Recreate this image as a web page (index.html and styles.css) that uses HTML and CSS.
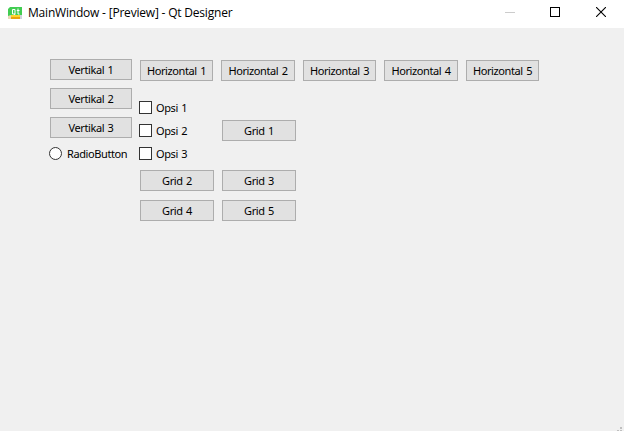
FILE: index.html
```html
<!DOCTYPE html>
<html lang="id">
<head>
<meta charset="utf-8">
<title>MainWindow - [Preview] - Qt Designer</title>
<link rel="stylesheet" href="styles.css">
</head>
<body>
<header class="titlebar">
  <svg class="logo" width="14" height="12" viewBox="0 0 14 12">
    <path d="M2 0H14V9L12 11H0V2Z" fill="#41cd52"/>
    <path d="M4.5 2.5H7V7H4.5ZM6 7L7.5 8M10 1.5V7H11.5M8.8 3.5H11.5" fill="none" stroke="#fff"/>
    <path d="M0 9L3 8V12H0Z" fill="#e7d9b5"/>
    <path d="M3 8H12V10H3Z" fill="#ffd52b"/>
    <path d="M3 10H12V12H3Z" fill="#e8a50c"/>
    <path d="M12 8H14V12H12Z" fill="#cfd4dc"/>
  </svg>
  <span class="title">MainWindow - [Preview] - Qt Designer</span>
  <div class="controls">
    <svg width="10" height="10"><path d="M0 5.5H10" stroke="#ccc"/></svg>
    <svg width="10" height="10"><rect x=".5" y=".5" width="9" height="9" fill="none" stroke="#000"/></svg>
    <svg class="close" width="10" height="10"><path d="M0 0L10 10M10 0L0 10" stroke="#000" stroke-width="1.1"/></svg>
  </div>
</header>
<main class="content">
  <section class="vertical">
    <button class="btn">Vertikal 1</button>
    <button class="btn">Vertikal 2</button>
    <button class="btn">Vertikal 3</button>
    <label class="option radio"><span class="mark round"></span>RadioButton</label>
  </section>
  <section class="right">
    <div class="horizontal">
      <button class="btn">Horizontal 1</button>
      <button class="btn wide">Horizontal 2</button>
      <button class="btn">Horizontal 3</button>
      <button class="btn wide">Horizontal 4</button>
      <button class="btn">Horizontal 5</button>
    </div>
    <div class="grid">
      <div class="checks">
        <label class="option"><span class="mark"></span>Opsi 1</label>
        <label class="option"><span class="mark"></span>Opsi 2</label>
        <label class="option"><span class="mark"></span>Opsi 3</label>
      </div>
      <button class="btn">Grid 1</button>
      <button class="btn">Grid 2</button>
      <button class="btn">Grid 3</button>
      <button class="btn">Grid 4</button>
      <button class="btn">Grid 5</button>
    </div>
  </section>
</main>
<svg class="grip" width="5" height="5"><path d="M3 0H5V2H3ZM0 3H2V5H0ZM3 3H5V5H3Z" fill="#bfbfbf"/></svg>
</body>
</html>
```
FILE: styles.css
```css
* { box-sizing: border-box; }
body {
  margin: 0;
  height: 431px;
  overflow: hidden;
  background: #f0f0f0;
  color: #000;
  font: 11px/13px "Noto Sans", "DejaVu Sans", sans-serif;
  letter-spacing: -0.4px;
  word-spacing: 1px;
}
.titlebar {
  display: flex;
  align-items: center;
  height: 28px;
  padding: 0 18px 0 8px;
  background: #fff;
}
.logo { margin-top: -2px; }
.title {
  margin: -2px 0 0 6px;
  font: 12px/16px "Open Sans", "Noto Sans", sans-serif;
  letter-spacing: -0.2px;
  word-spacing: 0;
  white-space: nowrap;
}
.controls {
  display: flex;
  gap: 35px;
  margin: -4px 0 0 auto;
}
.controls svg { display: block; }
.controls .close { margin-left: 1px; }
.content {
  display: flex;
  gap: 8px;
  padding: 31px 0 0 50px;
}
.vertical {
  display: flex;
  flex-direction: column;
  gap: 8px;
  width: 82px;
}
.btn {
  height: 21px;
  padding: 0 0 1px;
  border: 1px solid #adadad;
  border-radius: 0;
  background: #e1e1e1;
  color: #000;
  font: inherit;
  letter-spacing: inherit;
  word-spacing: inherit;
  white-space: nowrap;
}
.option {
  display: flex;
  align-items: center;
  gap: 4px;
  height: 13px;
  margin-left: -1px;
  white-space: nowrap;
}
.mark {
  flex: none;
  width: 13px;
  height: 13px;
  border: 1px solid #333;
  background: #fff;
}
.round { border-radius: 50%; }
.radio {
  gap: 5px;
  margin-top: 1px;
}
.right { padding-top: 1px; }
.horizontal {
  display: flex;
  gap: 8px;
}
.horizontal .btn { width: 73px; }
.horizontal .wide { width: 74px; }
.grid {
  display: grid;
  grid-template-columns: 74px 74px;
  gap: 9px 8px;
  align-items: center;
  margin-top: 20px;
}
.checks {
  display: flex;
  flex-direction: column;
  gap: 10px;
  height: 60px;
}
.checks + .btn { margin-top: -1px; }
.grip {
  position: absolute;
  right: 2px;
  bottom: -1px;
}
```
